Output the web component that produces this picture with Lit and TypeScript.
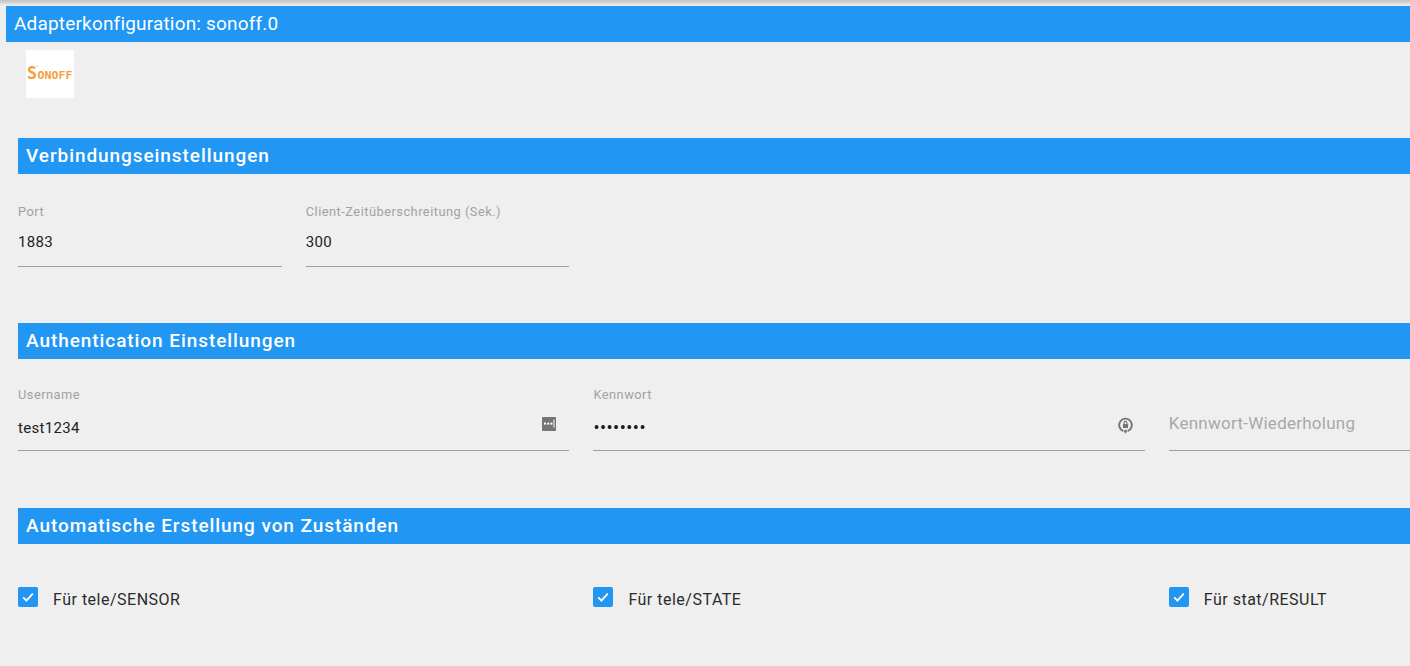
import { LitElement, html, css } from "lit";
import { customElement } from "lit/decorators.js";

@customElement("app-root")
export class AppRoot extends LitElement {
  static styles = css`
    :host { display: block; width: 1410px; height: 666px; overflow: hidden; background: #efefef; font-family: Roboto, "Noto Sans", sans-serif; color: #2b2b2b; }
    .topline { height: 6px; background: linear-gradient(#c4c4c4 0, #cfcfcf 2px, #e4e4e4 4px, #efefef 6px); }
    .title { margin-left: 6px; height: 36px; background: #2196f3; color: #fff; font-size: 19px; line-height: 36px; padding-left: 8px; letter-spacing: 0.18px; }
    .logo { margin: 8px 0 0 26px; width: 48px; height: 48px; background: #fff; }
    .logo svg { display: block; }
    .logo text { font-family: "DejaVu Sans Mono", monospace; fill: #f5a03c; font-weight: 700; }
    .section { margin-left: 18px; width: 1392px; height: 36px; box-sizing: border-box; padding-left: 8px; background: #2196f3; color: #fff; font-size: 19px; font-weight: 500; line-height: 36px; letter-spacing: 0.93px; }
    .s1 { margin-top: 40px; }
    .s2 { margin-top: 56px; }
    .s3 { margin-top: 57px; }
    .row { display: grid; grid-template-columns: repeat(6, 263.7px); column-gap: 24px; margin-left: 18px; width: 1800px; }
    .r1 { margin-top: 30px; }
    .r2 { margin-top: 28px; }
    .r3 { margin-top: 43px; }
    .field { position: relative; box-sizing: border-box; border-bottom: 1px solid #9e9e9e; height: 63px; }
    .r2 .field { height: 64px; }
    .wide { grid-column: span 2; }
    .label { display: block; font-size: 12.8px; line-height: 16px; color: #a2a2a2; letter-spacing: 0.5px; }
    .value { display: block; margin-top: 12px; font-size: 15px; line-height: 20px; color: #222; letter-spacing: 0.3px; }
    .r2 .value { margin-top: 15px; }
    .r2 .value.dots { margin-top: 15px; font-size: 18px; letter-spacing: 0.5px; color: #1a1a1a; }
    .placeholder { display: block; margin-top: 26px; font-size: 17px; line-height: 20px; color: #a8a8a8; letter-spacing: 0.25px; }
    .ficon { position: absolute; right: 12px; top: 29px; width: 16px; height: 16px; display: block; }
    .ficon.lock { right: 11px; top: 30px; width: 17px; height: 17px; }
    .check { display: flex; align-items: center; height: 20px; font-size: 16px; color: #2b2b2b; letter-spacing: 0.5px; }
    .check span.t { padding-top: 5px; }
    .box { width: 20px; height: 20px; border-radius: 2px; background: #2196f3; margin-right: 15px; flex: none; display: flex; align-items: center; justify-content: center; }
  `;

  private tick() {
    return html`<span class="box"><svg width="14" height="14" viewBox="0 0 14 14"><path d="M2.2 7.4 5.4 10.6 11.8 3.6" fill="none" stroke="#fff" stroke-width="1.8"/></svg></span>`;
  }

  render() {
    return html`
      <div class="topline"></div>
      <div class="title">Adapterkonfiguration: sonoff.0</div>
      <div class="logo">
        <svg width="48" height="48" viewBox="0 0 48 48">
          <text x="1" y="28.5" font-size="17" textLength="10" lengthAdjust="spacingAndGlyphs">S</text>
          <circle cx="11" cy="16.5" r="0.9" fill="#fbd9ae"/>
          <text x="11.5" y="28.5" font-size="10" textLength="35" lengthAdjust="spacingAndGlyphs">ONOFF</text>
        </svg>
      </div>

      <div class="section s1">Verbindungseinstellungen</div>
      <div class="row r1">
        <div class="field"><span class="label">Port</span><span class="value">1883</span></div>
        <div class="field"><span class="label">Client-Zeitüberschreitung (Sek.)</span><span class="value">300</span></div>
      </div>

      <div class="section s2">Authentication Einstellungen</div>
      <div class="row r2">
        <div class="field wide">
          <span class="label">Username</span><span class="value">test1234</span>
          <svg class="ficon" viewBox="0 0 16 16"><path fill="#757575" d="M2 1h12a1 1 0 0 1 1 1v12a1 1 0 0 1-1 1H2a1 1 0 0 1-1-1V2a1 1 0 0 1 1-1z"/><rect x="3" y="6.6" width="2" height="2" fill="#fff"/><rect x="6.2" y="6.6" width="2" height="2" fill="#fff"/><rect x="9.4" y="6.6" width="2" height="2" fill="#fff"/><rect x="12.5" y="3.5" width="1" height="8" fill="#fff"/></svg>
        </div>
        <div class="field wide">
          <span class="label">Kennwort</span><span class="value dots">••••••••</span>
          <svg class="ficon lock" viewBox="0 0 16 16"><path fill="none" stroke="#757575" stroke-width="1.8" d="M6 13.2A6 6 0 1 1 10 13.2"/><path fill="#757575" d="M8 11.5l1.6 2-1.6 2.3-1.6-2.3z"/><rect x="5.6" y="6.6" width="4.8" height="3.8" rx=".5" fill="#757575"/><path fill="none" stroke="#757575" d="M6.6 6.6V5.5a1.4 1.4 0 0 1 2.8 0v1.1"/></svg>
        </div>
        <div class="field wide"><span class="placeholder">Kennwort-Wiederholung</span></div>
      </div>

      <div class="section s3">Automatische Erstellung von Zuständen</div>
      <div class="row r3">
        <div class="check wide">${this.tick()}<span class="t">Für tele/SENSOR</span></div>
        <div class="check wide">${this.tick()}<span class="t">Für tele/STATE</span></div>
        <div class="check wide">${this.tick()}<span class="t">Für stat/RESULT</span></div>
      </div>
    `;
  }
}
